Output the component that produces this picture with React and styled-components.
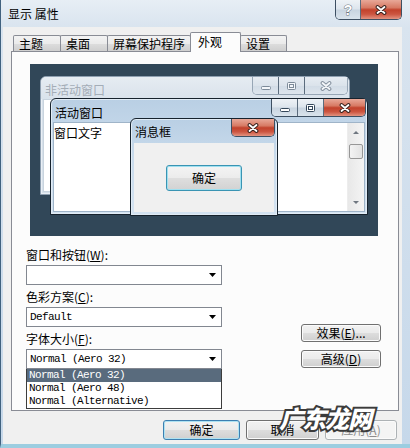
import React from 'react'
import styled, { createGlobalStyle } from 'styled-components'

const cjk = `"Noto Sans CJK SC", "Liberation Sans", sans-serif`
const mono = `"Liberation Mono", "DejaVu Sans Mono", monospace`

const GlobalStyle = createGlobalStyle`
  html, body {
    margin: 0;
    padding: 0;
  }
  body {
    width: 410px;
    height: 448px;
    overflow: hidden;
    background: #3a6ea5;
    font-family: ${cjk};
    font-size: 12px;
    color: #000;
  }
`

const glass = 'linear-gradient(180deg, #eef2f6 0%, #dde5ed 48%, #c8d4e0 52%, #d9e3ec 100%)'
const glassDim = 'linear-gradient(180deg, #e6ecf2 0%, #dbe3eb 50%, #d2dce6 52%, #dde5ed 100%)'
const red = 'linear-gradient(180deg, #e8a898 0%, #d77a64 40%, #c2422c 52%, #cc5540 75%, #e39380 100%)'

const Window = styled.div`
  position: relative;
  width: 410px;
  height: 448px;
  box-sizing: border-box;
  display: flex;
  flex-direction: column;
  background: linear-gradient(180deg, #e7eef5 0px, #d9e4ef 27px, #c6d8ea 100%);
  border-left: 1px solid #41627f;
  border-bottom: 4px solid #9ccde0;
  padding: 0 8px 0 2px;
`

const TitleBar = styled.div`
  height: 27px;
  display: flex;
  align-items: flex-start;
  flex-shrink: 0;
`

const TitleText = styled.div`
  margin: 6px 0 0 5px;
  line-height: 16px;
  font-size: 12px;
`

const CaptionGroup = styled.div`
  display: flex;
  margin-left: auto;
  margin-right: ${p => p.$mr || 0}px;
  align-self: flex-start;
  border: 1px solid ${p => (p.$dim ? '#97a6b5' : '#3d4f62')};
  border-top: none;
  border-radius: 0 0 5px 5px;
  overflow: hidden;
`

const CaptionBtn = styled.div`
  width: ${p => p.$w}px;
  height: ${p => p.$h || 16}px;
  box-sizing: border-box;
  display: flex;
  align-items: center;
  justify-content: center;
  background: ${p => (p.$red ? red : p.$dim ? glassDim : glass)};
  & + & {
    border-left: 1px solid ${p => (p.$dim ? '#a9b6c3' : '#5b6c7d')};
  }
`

const HelpMark = styled.span`
  font-family: "Liberation Sans", sans-serif;
  font-weight: bold;
  font-size: 14px;
  line-height: 14px;
  color: #fff;
  -webkit-text-stroke: 1px #6d7782;
  paint-order: stroke fill;
`

const ClientArea = styled.div`
  flex: 1;
  display: flex;
  flex-direction: column;
  background: #f0f0f0;
  padding: 5px 3px 0 8px;
`

const TabRow = styled.div`
  display: flex;
  align-items: flex-end;
  height: 20px;
  padding-left: 2px;
  margin-bottom: -1px;
  position: relative;
  z-index: 1;
`

const Tab = styled.div`
  width: ${p => p.$w}px;
  height: ${p => (p.$active ? 20 : 16)}px;
  margin-bottom: ${p => (p.$active ? 0 : 1)}px;
  box-sizing: border-box;
  border: 1px solid #898c95;
  border-bottom: none;
  border-radius: 2px 2px 0 0;
  background: ${p => (p.$active ? '#fcfcfc' : 'linear-gradient(180deg, #f3f3f3 0%, #ebebeb 50%, #dddddd 52%, #cfcfcf 100%)')};
  padding-left: ${p => (p.$active ? 7 : 5)}px;
  line-height: ${p => (p.$active ? 18 : 15)}px;
  font-size: 12px;
  & + & {
    margin-left: -1px;
  }
  position: relative;
  z-index: ${p => (p.$active ? 2 : 1)};
`

const Panel = styled.div`
  height: 360px;
  box-sizing: border-box;
  border: 1px solid #898c95;
  background: #fcfcfc;
  padding-top: 12px;
  display: flex;
  flex-direction: column;
`

const Desk = styled.div`
  position: relative;
  width: 348px;
  height: 172px;
  margin-left: 18px;
  background: #314758;
  overflow: hidden;
`

const Win = styled.div`
  position: absolute;
  left: ${p => p.$x}px;
  top: ${p => p.$y}px;
  width: ${p => p.$w}px;
  height: ${p => p.$h}px;
  box-sizing: border-box;
  display: flex;
  flex-direction: column;
  border: 1px solid ${p => (p.$dim ? '#8e9fb0' : '#16222d')};
  border-radius: 6px 6px 0 0;
  background: ${p => (p.$dim ? '#d6e0ea' : 'linear-gradient(180deg, #b9cfe4 0%, #c9dbec 40%, #d4e3f1 100%)')};
  box-shadow: inset 0 0 0 1px ${p => (p.$dim ? '#e9eff5' : '#e1ecf6')};
`

const WinTitle = styled.div`
  height: ${p => p.$h}px;
  flex-shrink: 0;
  display: flex;
  align-items: flex-start;
  background: ${p => (p.$dim ? 'linear-gradient(180deg, #e6ecf2, #d9e2eb)' : 'transparent')};
  border-radius: 5px 5px 0 0;
`

const WinCaption = styled.span`
  margin: ${p => p.$top}px 0 0 4px;
  line-height: 16px;
  font-size: 12px;
  color: ${p => (p.$dim ? '#a4adb7' : '#000')};
`

const WinBody = styled.div`
  flex: 1;
  margin: 0 2px 2px;
  display: flex;
  background: ${p => p.$bg || '#fff'};
  border: 1px solid ${p => (p.$dim ? '#c9d4de' : '#9fb4c8')};
  overflow: hidden;
`

const WinText = styled.div`
  flex: 1;
  line-height: 16px;
  padding-top: 2px;
`

const ScrollBar = styled.div`
  width: 16px;
  display: flex;
  flex-direction: column;
  align-items: center;
  background: linear-gradient(90deg, #e8e8e8, #f4f4f4);
  border-left: 1px solid #ededed;
`

const ArrowBox = styled.div`
  height: 18px;
  display: flex;
  align-items: center;
  justify-content: center;
  margin-top: ${p => (p.$end ? 'auto' : 0)};
`

const Thumb = styled.div`
  width: 14px;
  height: 15px;
  box-sizing: border-box;
  border: 1px solid #979797;
  border-radius: 2px;
  background: linear-gradient(90deg, #f3f3f3, #e2e2e2);
  margin-top: 3px;
`

const MsgBody = styled.div`
  flex: 1;
  margin: 0 3px 3px;
  background: #f0f0f0;
  display: flex;
  align-items: center;
  justify-content: center;
`

const MsgButton = styled.div`
  width: 76px;
  height: 26px;
  box-sizing: border-box;
  border: 1px solid #3a94b3;
  border-radius: 3px;
  box-shadow: inset 0 0 0 1px #9fe0f0;
  background: linear-gradient(180deg, #f4f4f4 0%, #ececec 48%, #dedede 52%, #d2d2d2 100%);
  display: flex;
  align-items: center;
  justify-content: center;
  font-size: 12px;
`

const Lower = styled.div`
  display: flex;
  margin: 11px 0 0 14px;
`

const FieldColumn = styled.div`
  width: 196px;
  display: flex;
  flex-direction: column;
  gap: 4px;
`

const Field = styled.div`
  position: relative;
  display: flex;
  flex-direction: column;
`

const Label = styled.div`
  line-height: 16px;
  margin-bottom: 2px;
  font-size: 12px;
`

const Select = styled.div`
  height: 20px;
  box-sizing: border-box;
  border: 1px solid #828790;
  background: #fff;
  display: flex;
  align-items: center;
  padding: 0 5px 0 3px;
  font-family: ${mono};
  font-size: 11px;
  letter-spacing: -0.6px;
`

const SelectValue = styled.span`
  flex: 1;
  white-space: pre;
`

const DropList = styled.div`
  position: absolute;
  top: 100%;
  left: 0;
  width: 196px;
  box-sizing: border-box;
  border: 1px solid #3c3c3c;
  border-top: none;
  background: #fff;
  z-index: 3;
`

const DropItem = styled.div`
  height: 13px;
  line-height: 13px;
  padding-left: 2px;
  font-family: ${mono};
  font-size: 11px;
  letter-spacing: -0.6px;
  white-space: pre;
  background: ${p => (p.$sel ? '#596b7d' : 'transparent')};
  color: ${p => (p.$sel ? '#fff' : '#000')};
`

const SideButtons = styled.div`
  margin-left: 79px;
  display: flex;
  flex-direction: column;
  justify-content: flex-end;
  gap: 8px;
  padding-bottom: 1px;
`

const Button = styled.div`
  width: ${p => p.$w}px;
  height: ${p => p.$h}px;
  box-sizing: border-box;
  border: 1px solid ${p => (p.$default ? '#3c7fb1' : p.$disabled ? '#adb2b5' : '#707070')};
  border-radius: 3px;
  box-shadow: inset 0 0 0 1px ${p => (p.$default ? '#aee2f2' : '#fbfbfb')};
  background: ${p => (p.$disabled ? '#f4f4f4' : 'linear-gradient(180deg, #f2f2f2 0%, #ebebeb 48%, #dddddd 52%, #cfcfcf 100%)')};
  color: ${p => (p.$disabled ? '#8d8d8d' : '#000')};
  display: flex;
  align-items: center;
  justify-content: center;
  font-size: 12px;
  line-height: 14px;
`

const BottomRow = styled.div`
  display: flex;
  justify-content: flex-end;
  gap: 6px;
  margin: 9px 2px 0 0;
`

const Watermark = styled.div`
  position: absolute;
  left: 278px;
  top: 402px;
  font-family: ${cjk};
  font-weight: 900;
  font-style: italic;
  font-size: 24px;
  line-height: 32px;
  letter-spacing: -1px;
  color: #fff;
  -webkit-text-stroke: 4px #3b3b3b;
  paint-order: stroke fill;
  z-index: 5;
`

const MinGlyph = ({ c = '#34475a', f = '#fff' }) => (
  <svg width="12" height="10" viewBox="0 0 12 10">
    <rect x="1.5" y="5.5" width="9" height="3" rx="1" fill={f} stroke={c} />
  </svg>
)

const MaxGlyph = ({ c = '#34475a', f = '#fff' }) => (
  <svg width="11" height="10" viewBox="0 0 11 10">
    <rect x="1.5" y="1.5" width="8" height="7" rx="1" fill={f} stroke={c} />
    <rect x="3.5" y="3.5" width="4" height="3" fill="none" stroke={c} />
  </svg>
)

const CloseGlyph = ({ c = '#3a2420', f = '#fff' }) => (
  <svg width="14" height="10" viewBox="0 0 14 10">
    <path d="M3.5 2 L10.5 8 M10.5 2 L3.5 8" stroke={c} strokeWidth="3.8" strokeLinecap="round" />
    <path d="M3.5 2 L10.5 8 M10.5 2 L3.5 8" stroke={f} strokeWidth="1.8" strokeLinecap="round" />
  </svg>
)

const Tri = ({ down, color = '#000', w = 7, h = 4 }) => (
  <svg width={w} height={h} viewBox={`0 0 ${w} ${h}`}>
    <polygon points={down ? `0,0 ${w},0 ${w / 2},${h}` : `0,${h} ${w},${h} ${w / 2},0`} fill={color} />
  </svg>
)

const Combo = ({ value }) => (
  <Select>
    <SelectValue>{value}</SelectValue>
    <Tri down />
  </Select>
)

export default function App() {
  return (
    <>
      <GlobalStyle />
      <Window>
        <TitleBar>
          <TitleText>显示 属性</TitleText>
          <CaptionGroup>
            <CaptionBtn $w={24} $h={19}>
              <HelpMark>?</HelpMark>
            </CaptionBtn>
            <CaptionBtn $w={41} $h={19} $red>
              <CloseGlyph />
            </CaptionBtn>
          </CaptionGroup>
        </TitleBar>

        <ClientArea>
          <TabRow>
            <Tab $w={48}>主题</Tab>
            <Tab $w={48}>桌面</Tab>
            <Tab $w={84}>屏幕保护程序</Tab>
            <Tab $w={51} $active>外观</Tab>
            <Tab $w={47}>设置</Tab>
          </TabRow>

          <Panel>
            <Desk>
              <Win $x={10} $y={12} $w={310} $h={119} $dim>
                <WinTitle $h={22} $dim>
                  <WinCaption $top={5} $dim>非活动窗口</WinCaption>
                  <CaptionGroup $dim $mr={1}>
                    <CaptionBtn $w={25} $h={17} $dim>
                      <MinGlyph c="#7d8b99" f="#f4f7fa" />
                    </CaptionBtn>
                    <CaptionBtn $w={26} $h={17} $dim>
                      <MaxGlyph c="#7d8b99" f="#f4f7fa" />
                    </CaptionBtn>
                    <CaptionBtn $w={43} $h={17} $dim>
                      <CloseGlyph c="#8793a0" f="#f4f7fa" />
                    </CaptionBtn>
                  </CaptionGroup>
                </WinTitle>
                <WinBody $dim />
              </Win>

              <Win $x={20} $y={34} $w={318} $h={117}>
                <WinTitle $h={23}>
                  <WinCaption $top={6}>活动窗口</WinCaption>
                  <CaptionGroup $mr={1}>
                    <CaptionBtn $w={25} $h={17}>
                      <MinGlyph />
                    </CaptionBtn>
                    <CaptionBtn $w={26} $h={17}>
                      <MaxGlyph />
                    </CaptionBtn>
                    <CaptionBtn $w={42} $h={17} $red>
                      <CloseGlyph />
                    </CaptionBtn>
                  </CaptionGroup>
                </WinTitle>
                <WinBody>
                  <WinText>窗口文字</WinText>
                  <ScrollBar>
                    <ArrowBox>
                      <Tri color="#6f7780" w={6} h={3} />
                    </ArrowBox>
                    <Thumb />
                    <ArrowBox $end>
                      <Tri down color="#6f7780" w={6} h={3} />
                    </ArrowBox>
                  </ScrollBar>
                </WinBody>
              </Win>

              <Win $x={100} $y={54} $w={148} $h={98}>
                <WinTitle $h={24}>
                  <WinCaption $top={5}>消息框</WinCaption>
                  <CaptionGroup $mr={2}>
                    <CaptionBtn $w={42} $h={17} $red>
                      <CloseGlyph />
                    </CaptionBtn>
                  </CaptionGroup>
                </WinTitle>
                <MsgBody>
                  <MsgButton>确定</MsgButton>
                </MsgBody>
              </Win>
            </Desk>

            <Lower>
              <FieldColumn>
                <Field>
                  <Label>窗口和按钮(<u>W</u>):</Label>
                  <Combo value="" />
                </Field>
                <Field>
                  <Label>色彩方案(<u>C</u>):</Label>
                  <Combo value="Default" />
                </Field>
                <Field>
                  <Label>字体大小(<u>F</u>):</Label>
                  <Combo value="Normal (Aero 32)" />
                  <DropList>
                    <DropItem $sel>Normal (Aero 32)</DropItem>
                    <DropItem>Normal (Aero 48)</DropItem>
                    <DropItem>Normal (Alternative)</DropItem>
                  </DropList>
                </Field>
              </FieldColumn>
              <SideButtons>
                <Button $w={80} $h={18}>效果(<u>E</u>)...</Button>
                <Button $w={80} $h={18}>高级(<u>D</u>)</Button>
              </SideButtons>
            </Lower>
          </Panel>

          <BottomRow>
            <Button $w={77} $h={20} $default>确定</Button>
            <Button $w={73} $h={20}>取消</Button>
            <Button $w={72} $h={20} $disabled>应用(<u>A</u>)</Button>
          </BottomRow>
        </ClientArea>

        <Watermark>广东龙网</Watermark>
      </Window>
    </>
  )
}
